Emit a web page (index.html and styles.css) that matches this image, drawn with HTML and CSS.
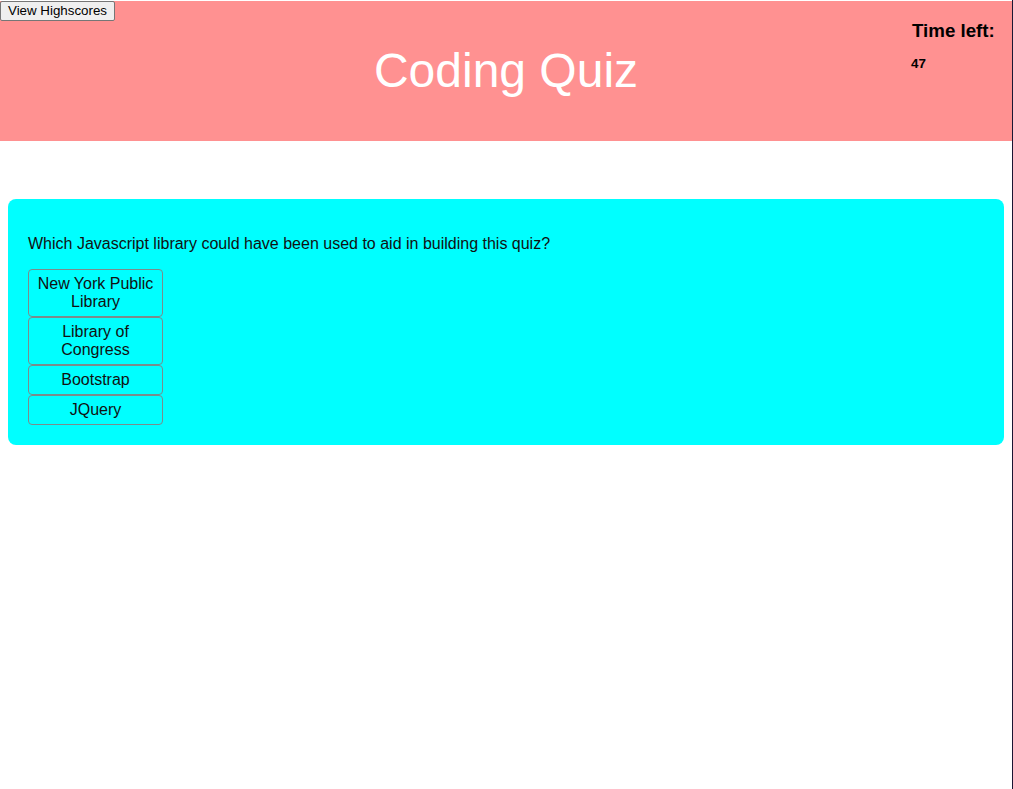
FILE: index.html
```html
<!DOCTYPE html>
<html lang="en">
<head>
<meta charset="utf-8">
<title>Coding Quiz</title>
<link rel="stylesheet" href="styles.css">
</head>
<body>
<header class="top">
  <div class="top-left">
    <button class="hs-btn" type="button">View Highscores</button>
  </div>
  <h1 class="title">Coding Quiz</h1>
  <div class="timer">
    <h3 class="timer-label">Time left:</h3>
    <h5 class="timer-value">47</h5>
  </div>
</header>
<main class="quiz">
  <section class="card">
    <p class="question">Which Javascript library could have been used to aid in building this quiz?</p>
    <div class="answers">
      <button class="answer" type="button">New York Public Library</button>
      <button class="answer" type="button">Library of Congress</button>
      <button class="answer" type="button">Bootstrap</button>
      <button class="answer" type="button">JQuery</button>
    </div>
  </section>
</main>
</body>
</html>
```
FILE: styles.css
```css
html {
  background: #ffffff;
  border-right: 1px solid #1c1533;
  min-height: 100%;
  box-sizing: border-box;
}
body {
  margin: 0;
  padding-top: 1px;
  font-family: "Liberation Sans", Arial, sans-serif;
  color: #000;
}
.top {
  background: #ff9191;
  height: 140px;
  display: grid;
  grid-template-columns: 1fr auto 1fr;
  align-items: start;
}
.top-left {
  justify-self: start;
}
.hs-btn {
  font-family: "Liberation Sans", Arial, sans-serif;
  font-size: 13.333px;
  color: #000;
  background: #efefef;
  border: 1px solid #767676;
  border-radius: 2px;
  padding: 1px 7px;
  margin: 0;
  height: 20px;
  line-height: 16px;
}
.title {
  margin: 42px 0 0;
  font-size: 48px;
  font-weight: normal;
  line-height: 55px;
  color: #ffffff;
}
.timer {
  justify-self: end;
  width: 84px;
  margin-right: 16px;
  padding-top: 19px;
}
.timer-label {
  margin: 0;
  font-size: 18.72px;
  line-height: 22px;
  font-weight: bold;
  white-space: nowrap;
}
.timer-value {
  margin: 14px 0 0 -1px;
  font-size: 13.33px;
  line-height: 16px;
  font-weight: bold;
}
.quiz {
  padding: 58px 8px 0;
}
.card {
  background: #00ffff;
  border-radius: 8px;
  padding: 20px 20px 20px;
}
.question {
  margin: 16px 0 16px;
  font-size: 16px;
  line-height: 18px;
  color: #111;
}
.answers {
  display: flex;
  flex-direction: column;
  align-items: flex-start;
}
.answer {
  width: 135px;
  font-family: "Liberation Sans", Arial, sans-serif;
  font-size: 16px;
  line-height: 18px;
  color: #111;
  background: transparent;
  border: 1px solid #7a8c8c;
  border-radius: 4px;
  padding: 5px 6px;
  margin: 0;
  text-align: center;
}
```
